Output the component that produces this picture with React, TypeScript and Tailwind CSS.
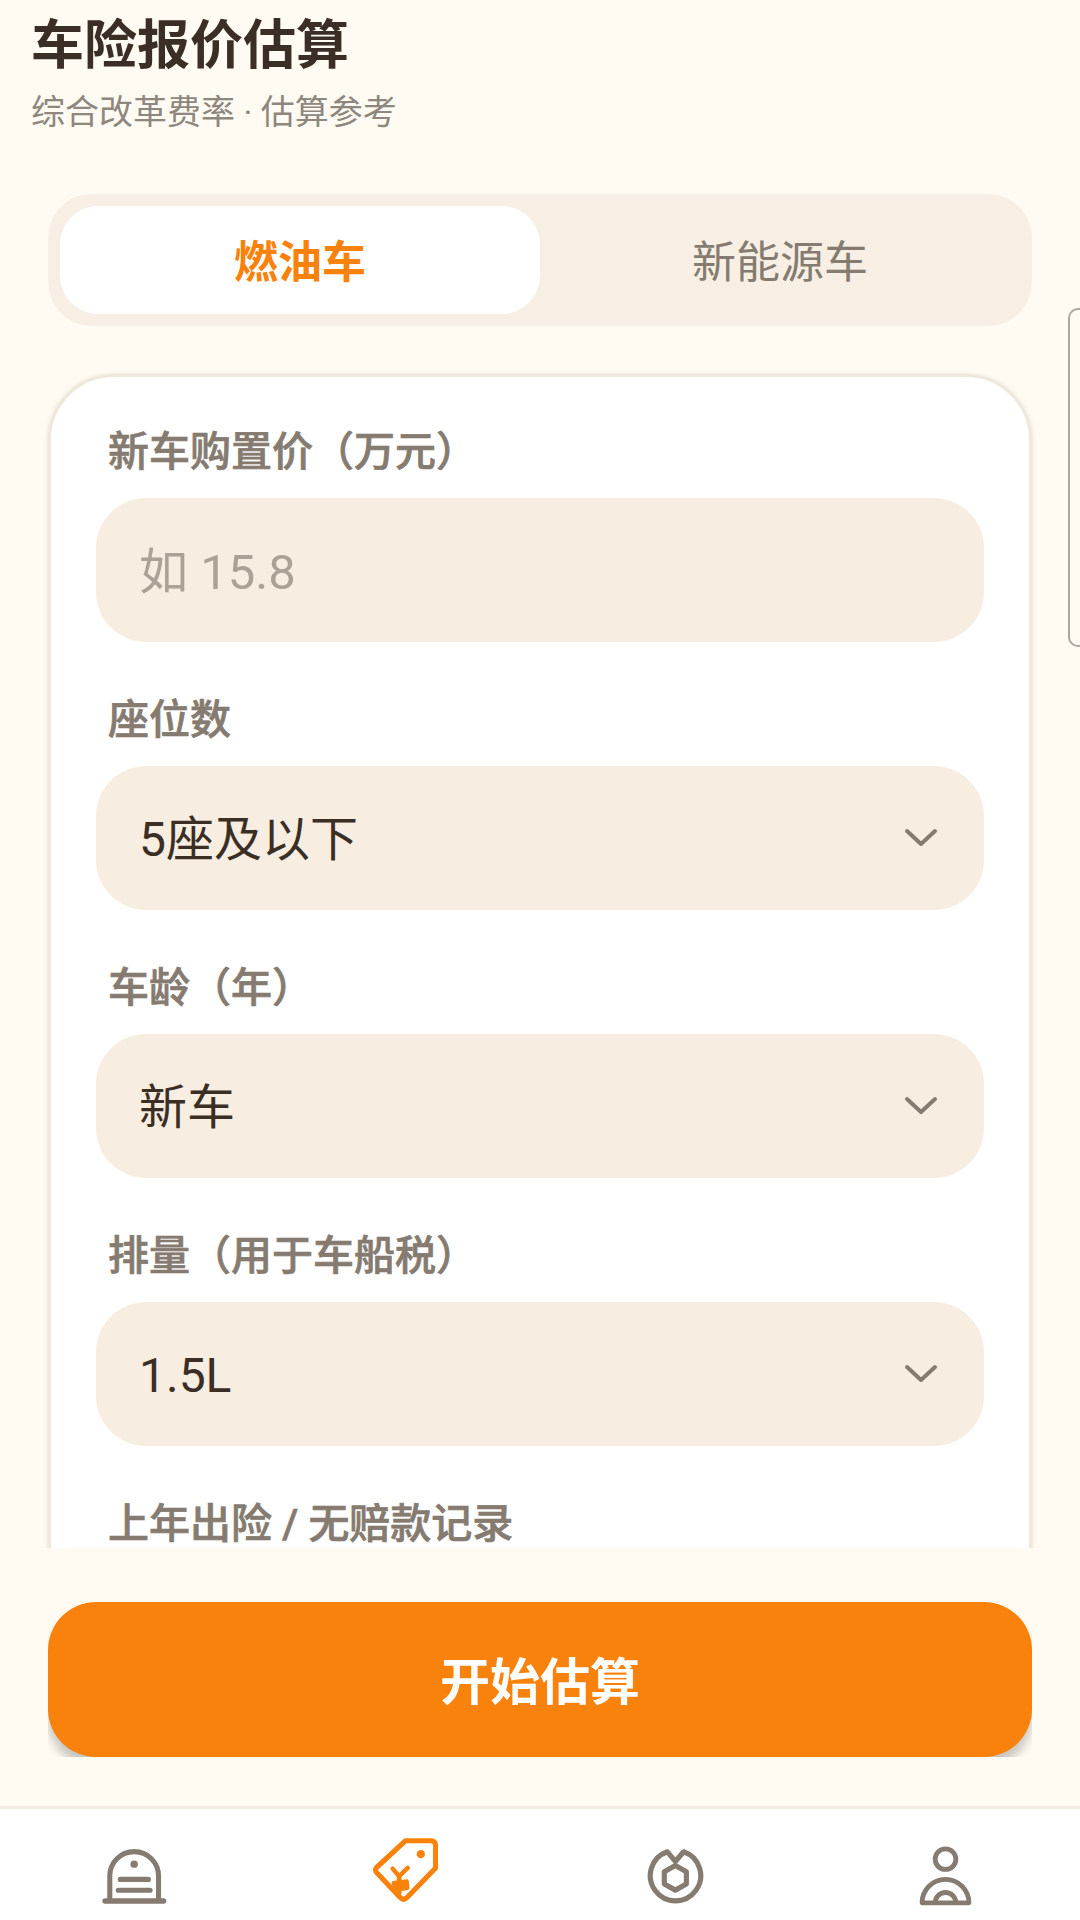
import React from "react";

const FONT = "font-['Roboto','Noto_Sans_CJK_SC',sans-serif]";

function Chevron() {
  return (
    <svg width="34" height="20" viewBox="0 0 34 20" fill="none" className="shrink-0">
      <path d="M3 3 L17 16 L31 3" stroke="#857b70" strokeWidth="4" strokeLinecap="round" strokeLinejoin="round" />
    </svg>
  );
}

function Field({ label, children }: { label: string; children: React.ReactNode }) {
  return (
    <div className="flex flex-col">
      <label className="h-[58px] pl-[12px] text-[41px] leading-[58px] font-medium text-[#857b70] [-webkit-text-stroke:0.7px_#857b70] whitespace-nowrap">{label}</label>
      <div className="mt-[17px] flex h-[144px] items-center justify-between rounded-[50px] bg-[#f7ede1] pl-[43px] pr-[46px] text-[48px] text-[#3a2e25]">
        {children}
      </div>
    </div>
  );
}

function SelectField({ label, value }: { label: string; value: string }) {
  return (
    <Field label={label}>
      <span className="pt-[3px]">{value}</span>
      <Chevron />
    </Field>
  );
}

function HomeIcon() {
  return (
    <svg width="65" height="58" viewBox="295 205 192 170" fill="none" stroke="#857b70" strokeLinecap="round">
      <path d="M318 362 V290 A72 72 0 0 1 462 290 V362" strokeWidth="15" />
      <path d="M304 364 H477" strokeWidth="16" />
      <circle cx="390" cy="255" r="11" fill="#857b70" stroke="none" />
      <path d="M349 300 H432" strokeWidth="15" />
      <path d="M343 332 H437" strokeWidth="15" />
    </svg>
  );
}

function PriceTagIcon() {
  return (
    <svg width="66" height="66" viewBox="1078 172 192 192" fill="none" stroke="#f8820b" strokeLinejoin="round" strokeLinecap="round">
      <path d="M1175 183 H1248 Q1263 183 1263 198 V262 L1180 348 Q1170 358 1160 348 L1092 276 Q1084 267 1092 260 Z" strokeWidth="15" />
      <circle cx="1220" cy="222" r="12" fill="#f8820b" stroke="none" />
      <path d="M1138 264 L1157 286 L1182 262" strokeWidth="13" />
      <path d="M1157 286 V335" strokeWidth="14" />
      <path d="M1140 305 L1180 300 L1182 321 L1146 327 Z" fill="#f8820b" strokeWidth="10" />
    </svg>
  );
}

function MedalIcon() {
  return (
    <svg width="57" height="58" viewBox="308 206 165 168" fill="none" stroke="#857b70" strokeLinejoin="round" strokeLinecap="round">
      <path d="M414 217 A73 73 0 1 1 367 217 L390 245 Z" strokeWidth="15" />
      <path d="M390 257 L422 275 V310 L390 328 L358 310 V275 Z" strokeWidth="15" />
    </svg>
  );
}

function ProfileIcon() {
  return (
    <svg width="53" height="60" viewBox="1098 202 154 174" fill="none" stroke="#857b70" strokeLinejoin="round">
      <circle cx="1175" cy="240" r="30" strokeWidth="14" />
      <path d="M1107 367 A68 68 0 0 1 1243 367 Z" strokeWidth="14" />
      <path d="M1145 367 A30 30 0 0 1 1205 367" strokeWidth="14" />
    </svg>
  );
}

export default function App() {
  return (
    <div className={`${FONT} relative flex h-[1920px] w-[1080px] flex-col overflow-hidden bg-[#fffbf3]`}>
      <header className="shrink-0 pl-[31px] pt-[11px]">
        <h1 className="h-[70px] text-[53px] leading-[70px] font-bold text-[#3a2e25]">车险报价估算</h1>
        <p className="mt-[9px] h-[44px] text-[34px] leading-[44px] text-[#8e877d]">综合改革费率 · 估算参考</p>
      </header>

      <main className="min-h-0 flex-1 overflow-hidden px-[48px] pt-[60px]">
        <div className="flex h-[132px] rounded-[44px] bg-[#f7efe4] p-[12px]">
          <button className="flex-1 rounded-[38px] bg-white pt-[5px] text-[44px] font-semibold text-[#f8820b]">燃油车</button>
          <button className="flex-1 pt-[5px] text-[44px] font-normal text-[#857b70]">新能源车</button>
        </div>

        <section className="mt-[48px] flex flex-col gap-[49px] rounded-[66px] border-[3px] border-[#efe8dc] bg-white px-[45px] pb-[40px] pt-[46px] shadow-[0_1px_5px_rgba(90,70,40,0.16)]">
          <Field label="新车购置价（万元）">
            <input
              readOnly
              placeholder="如 15.8"
              className="w-full bg-transparent pt-[5px] text-[49px] outline-none placeholder:text-[#aaa297]"
            />
          </Field>
          <SelectField label="座位数" value="5座及以下" />
          <SelectField label="车龄（年）" value="新车" />
          <SelectField label="排量（用于车船税）" value="1.5L" />
          <Field label="上年出险 / 无赔款记录">
            <span>0次</span>
            <Chevron />
          </Field>
        </section>
      </main>

      <div className="shrink-0 px-[48px] pb-[49px] pt-[54px]">
        <div className="h-[155px] overflow-hidden">
          <button className="h-full w-full rounded-[48px] bg-[#f8820b] pt-[7px] text-[50px] font-semibold text-white shadow-[0_10px_10px_rgba(60,60,60,0.28)]">
            开始估算
          </button>
        </div>
      </div>

      <nav className="grid h-[114px] shrink-0 grid-cols-4 justify-items-center border-t-[3px] border-[#f3ebe0] bg-white">
        <div className="-ml-[1px] mt-[38px]"><HomeIcon /></div>
        <div className="mt-[28px]"><PriceTagIcon /></div>
        <div className="mt-[39px]"><MedalIcon /></div>
        <div className="mt-[37px]"><ProfileIcon /></div>
      </nav>

      {/* Edge handle of the adjacent panel */}
      <div className="absolute right-0 top-[308px] h-[339px] w-[12px] rounded-l-[10px] border-y-2 border-l-2 border-[#aba69f]" />
    </div>
  );
}
